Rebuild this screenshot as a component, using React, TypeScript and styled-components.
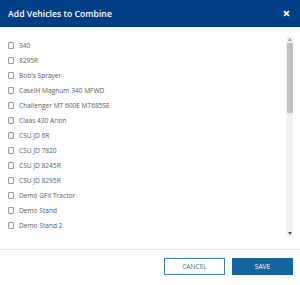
import React from 'react';
import styled, { createGlobalStyle } from 'styled-components';

const GlobalStyle = createGlobalStyle`
  html, body {
    margin: 0;
    padding: 0;
    background: #ffffff;
  }
  body {
    font-family: 'Open Sans', 'Noto Sans', sans-serif;
  }
`;

const Dialog = styled.div`
  width: 300px;
  height: 285px;
  display: flex;
  flex-direction: column;
  background: #ffffff;
  overflow: hidden;
`;

const Header = styled.div`
  height: 27px;
  min-height: 27px;
  display: flex;
  align-items: center;
  justify-content: space-between;
  padding: 0 10px 0 8px;
  background: #003f87;
  color: #ffffff;
`;

const Title = styled.div`
  font-size: 8.6px;
  font-weight: 600;
  letter-spacing: 0.05px;
`;

const CloseButton = styled.button`
  border: none;
  background: none;
  padding: 0;
  width: 8px;
  height: 8px;
  display: flex;
  align-items: center;
  justify-content: center;
  cursor: pointer;

  svg {
    width: 7px;
    height: 7px;
  }
`;

const Body = styled.div`
  height: 201px;
  margin-top: 9px;
  display: flex;
  padding: 0 7px;
`;

const List = styled.div`
  flex: 1;
  height: 199px;
  overflow: hidden;
  padding-top: 2px;
  display: flex;
  flex-direction: column;
`;

const Row = styled.label`
  height: 15px;
  min-height: 15px;
  display: flex;
  align-items: center;
  gap: 4px;
  font-size: 6.6px;
  color: #5a5a5a;
  cursor: pointer;
  padding-left: 0.5px;
`;

const Box = styled.span`
  width: 6.5px;
  height: 6.5px;
  border: 1px solid #999999;
  border-radius: 1px;
  background: #ffffff;
  box-sizing: border-box;
  flex-shrink: 0;
  margin-right: 1px;
`;

const ScrollTrack = styled.div`
  width: 7px;
  background: #f1f1f1;
  display: flex;
  flex-direction: column;
  align-items: center;
`;

const Arrow = styled.div<{ $down?: boolean }>`
  height: 7px;
  display: flex;
  align-items: center;
  justify-content: center;

  svg {
    width: 4px;
    height: 3px;
    fill: ${(p) => (p.$down ? '#505050' : '#a3a3a3')};
  }
`;

const Thumb = styled.div`
  width: 6px;
  height: 70px;
  background: #c1c1c1;
`;

const Spacer = styled.div`
  flex: 1;
`;

const Divider = styled.div`
  height: 1px;
  background: #e6e6e6;
  margin-top: 12px;
`;

const Footer = styled.div`
  display: flex;
  justify-content: flex-end;
  gap: 7px;
  padding: 8px 7px 0 0;
`;

const Button = styled.button<{ $primary?: boolean }>`
  width: 61px;
  height: 17px;
  box-sizing: border-box;
  padding: 0;
  font-family: 'Open Sans', 'Noto Sans', sans-serif;
  font-size: 6.6px;
  text-transform: uppercase;
  border: 1px solid ${(p) => (p.$primary ? '#16649f' : '#3d7ab3')};
  background: ${(p) => (p.$primary ? '#16649f' : '#ffffff')};
  color: ${(p) => (p.$primary ? '#ffffff' : '#3d6f9f')};
  cursor: pointer;
`;

const vehicles = [
  '340',
  '8295R',
  "Bob's Sprayer",
  'CaseIH Magnum 340 MFWD',
  'Challenger MT 600E MT685SE',
  'Claas 430 Arion',
  'CSU JD 6R',
  'CSU JD 7820',
  'CSU JD 8245R',
  'CSU JD 8295R',
  'Demo GFX Tractor',
  'Demo Stand',
  'Demo Stand 2',
];

const App = () => {
  return (
    <Dialog>
      <GlobalStyle />
      <Header>
        <Title>Add Vehicles to Combine</Title>
        <CloseButton aria-label="Close">
          <svg viewBox="0 0 10 10">
            <path
              d="M1.5 1.5 L8.5 8.5 M8.5 1.5 L1.5 8.5"
              stroke="#ffffff"
              strokeWidth="2.6"
              strokeLinecap="butt"
            />
          </svg>
        </CloseButton>
      </Header>

      <Body>
        <List>
          {vehicles.map((name) => (
            <Row key={name}>
              <Box />
              <span>{name}</span>
            </Row>
          ))}
        </List>
        <ScrollTrack>
          <Arrow>
            <svg viewBox="0 0 4 3">
              <polygon points="2,0 4,3 0,3" />
            </svg>
          </Arrow>
          <Thumb />
          <Spacer />
          <Arrow $down>
            <svg viewBox="0 0 4 3">
              <polygon points="0,0 4,0 2,3" />
            </svg>
          </Arrow>
        </ScrollTrack>
      </Body>

      <Divider />

      <Footer>
        <Button>Cancel</Button>
        <Button $primary>Save</Button>
      </Footer>
    </Dialog>
  );
};

export default App;
